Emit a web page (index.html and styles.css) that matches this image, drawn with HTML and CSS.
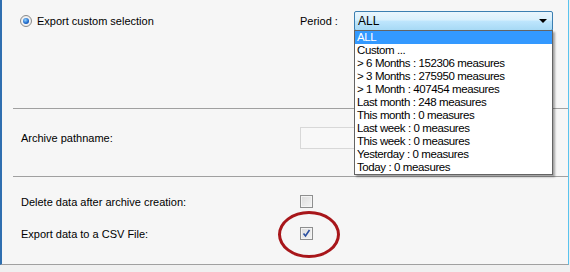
FILE: index.html
```html
<!DOCTYPE html>
<html>
<head>
<meta charset="utf-8">
<link rel="stylesheet" href="styles.css">
</head>
<body>
<div class="frame">
  <div class="panel">
    <div class="row row-top">
      <div class="opt">
        <span class="radio"><span class="dot"></span></span>
        <span>Export custom selection</span>
      </div>
      <div class="period-label">Period :</div>
      <div class="combo">
        <span class="combo-text">ALL</span>
        <span class="combo-arrow"></span>
      </div>
    </div>
    <div class="sep sep-1"></div>
    <div class="row row-archive">
      <div class="label">Archive pathname:</div>
      <div class="textbox"></div>
    </div>
    <div class="sep sep-2"></div>
    <div class="row row-check row-delete">
      <div class="label">Delete data after archive creation:</div>
      <span class="check"></span>
    </div>
    <div class="row row-check row-csv">
      <div class="label">Export data to a CSV File:</div>
      <span class="check checked">
        <svg width="9" height="9" viewBox="0 0 9 9"><path d="M1.5 4.5 L3.5 7 L7.5 1" fill="none" stroke="#2a4fa0" stroke-width="1.6"/></svg>
      </span>
    </div>
  </div>
  <div class="footer"></div>

  <ul class="dropdown">
    <li class="sel">ALL</li>
    <li>Custom ...</li>
    <li>&gt; 6 Months : 152306 measures</li>
    <li>&gt; 3 Months : 275950 measures</li>
    <li>&gt; 1 Month : 407454 measures</li>
    <li>Last month : 248 measures</li>
    <li>This month : 0 measures</li>
    <li>Last week : 0 measures</li>
    <li>This week : 0 measures</li>
    <li>Yesterday : 0 measures</li>
    <li>Today : 0 measures</li>
  </ul>
  <div class="annotation"></div>
</div>
</body>
</html>
```
FILE: styles.css
```css
* { box-sizing: border-box; }
html, body { margin: 0; padding: 0; }
body {
  width: 570px;
  height: 272px;
  background: #f0f0f0;
  font-family: "Liberation Sans", Arial, sans-serif;
  font-size: 11px;
  color: #000;
  overflow: hidden;
}
.frame {
  position: relative;
  width: 570px;
  height: 272px;
}
.panel {
  height: 265px;
  width: 569px;
  background: #f6f6f6;
  border-left: 2px solid #2f6fb0;
  border-right: 1px solid #59c3ee;
  border-bottom: 1px solid #a0a0a0;
  padding-top: 11px;
}
.footer { height: 7px; }
.row {
  display: grid;
  grid-template-columns: 279px 54px 199px;
  align-items: center;
  padding-left: 19px;
}
.row-top { height: 20px; }
.opt { display: flex; align-items: center; gap: 5px; margin-left: -1px; }
.radio {
  width: 12px; height: 12px;
  border-radius: 50%;
  border: 1px solid #8a8a8a;
  background: radial-gradient(circle at 50% 50%, #fff 0, #e6e6e6 100%);
  display: flex; align-items: center; justify-content: center;
}
.radio .dot {
  width: 6px; height: 6px; border-radius: 50%;
  background: radial-gradient(circle at 40% 35%, #8fd3ff 0, #1a64c8 60%, #0c3f8a 100%);
}
.combo {
  height: 20px;
  border: 1px solid #3c7fb1;
  border-radius: 2px;
  background: linear-gradient(to bottom, #eaf6fd 0, #d9f0fc 45%, #bee6fd 50%, #a7d9f5 100%);
  display: flex; align-items: center; justify-content: space-between;
  padding: 0 5px 0 3px;
  font-size: 12px;
}
.combo-arrow {
  width: 0; height: 0;
  border-left: 4px solid transparent;
  border-right: 4px solid transparent;
  border-top: 4px solid #000;
}
.sep {
  height: 1px;
  background: #a0a0a0;
  margin-left: 10px;
  border-left: 1px dotted #f6f6f6;
}
.sep-1 { margin-top: 77px; }
.row-archive { margin-top: 18px; height: 22px; grid-template-columns: 279px 60px; }
.textbox {
  height: 22px;
  border: 1px solid #d8d8d8;
  background: #f8f8f8;
}
.sep-2 { margin-top: 27px; }
.row-check { height: 13px; grid-template-columns: 279px 13px; }
.row-delete { margin-top: 18px; }
.row-csv { margin-top: 19px; }
.check {
  width: 13px; height: 13px;
  border: 1px solid #8e8f8f;
  background: linear-gradient(135deg, #dcdcdc 0, #f4f4f4 100%);
  display: flex; align-items: center; justify-content: center;
  box-shadow: inset 0 0 0 1px #f4f4f4;
}
.dropdown {
  position: absolute;
  left: 354px;
  top: 30px;
  width: 199px;
  margin: 0;
  padding: 0;
  list-style: none;
  background: #fff;
  border: 1px solid #646464;
  box-shadow: 2px 2px 2px rgba(0,0,0,0.35);
  font-size: 11.5px;
  letter-spacing: -0.4px;
}
.dropdown li {
  height: 13px;
  line-height: 13px;
  padding-left: 2px;
  white-space: nowrap;
}
.dropdown li.sel {
  background: #3399ff;
  color: #fff;
}
.annotation {
  position: absolute;
  left: 278px;
  top: 211px;
  width: 62px;
  height: 47px;
  border: 3px solid #a8161a;
  border-radius: 50%;
}
```
